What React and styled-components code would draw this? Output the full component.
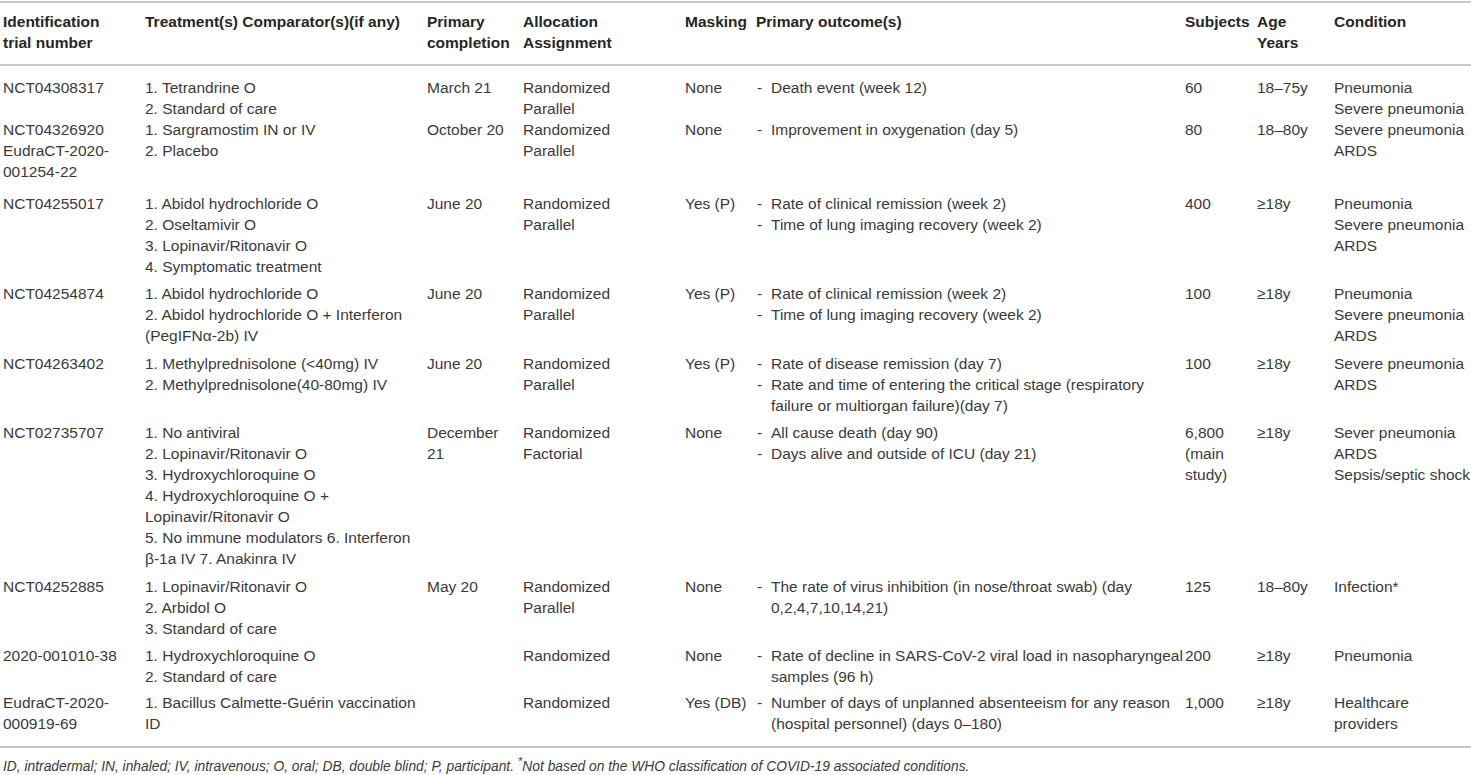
import React from "react";
import styled, { createGlobalStyle } from "styled-components";

const GlobalStyle = createGlobalStyle`
  html, body {
    margin: 0;
    padding: 0;
    background: #ffffff;
  }
  body {
    font-family: "Liberation Sans", Arial, Helvetica, sans-serif;
    color: #333333;
  }
`;

const Page = styled.div`
  width: 1471px;
  padding-top: 1px;
`;

const Table = styled.table`
  width: 1471px;
  table-layout: fixed;
  border-collapse: collapse;
  border-top: 2px solid #c8c8c8;
  border-bottom: 2px solid #c8c8c8;
  font-size: 15.5px;
  line-height: 21px;
`;

const HeadRow = styled.tr`
  border-bottom: 2px solid #c8c8c8;
`;

const HeadCell = styled.th`
  text-align: left;
  vertical-align: top;
  font-weight: 700;
  color: #262626;
  padding: 8px 3px 11px 3px;
  white-space: nowrap;
`;

const Cell = styled.td`
  vertical-align: top;
  padding: ${(p) => p.$pt}px 3px ${(p) => p.$pb}px 3px;
  white-space: nowrap;
  color: #3a3a3a;
`;

const Line = styled.div`
  white-space: nowrap;
`;

const Outcome = styled.div`
  display: flex;
  white-space: nowrap;
`;

const Dash = styled.span`
  flex: 0 0 14px;
  padding-left: 1px;
`;

const Footnote = styled.p`
  margin: 4px 0 0 3px;
  font-size: 13.8px;
  line-height: 18px;
  font-style: italic;
  color: #3a3a3a;
`;

// column widths, left to right
const widths = [142, 282, 96, 162, 71, 429, 72, 77, 140];

const headers = [
  ["Identification", "trial number"],
  ["Treatment(s) Comparator(s)(if any)"],
  ["Primary", "completion"],
  ["Allocation", "Assignment"],
  ["Masking"],
  ["Primary outcome(s)"],
  ["Subjects"],
  ["Age", "Years"],
  ["Condition"],
];

const rows = [
  {
    pt: 11,
    pb: 0,
    id: ["NCT04308317"],
    treat: ["1. Tetrandrine O", "2. Standard of care"],
    date: ["March 21"],
    alloc: ["Randomized", "Parallel"],
    mask: ["None"],
    out: [["Death event (week 12)"]],
    subj: ["60"],
    age: ["18–75y"],
    cond: ["Pneumonia", "Severe pneumonia"],
  },
  {
    pt: 0,
    pb: 8,
    id: ["NCT04326920", "EudraCT-2020-", "001254-22"],
    treat: ["1. Sargramostim IN or IV", "2. Placebo"],
    date: ["October 20"],
    alloc: ["Randomized", "Parallel"],
    mask: ["None"],
    out: [["Improvement in oxygenation (day 5)"]],
    subj: ["80"],
    age: ["18–80y"],
    cond: ["Severe pneumonia", "ARDS"],
  },
  {
    pt: 3,
    pb: 3,
    id: ["NCT04255017"],
    treat: [
      "1. Abidol hydrochloride O",
      "2. Oseltamivir O",
      "3. Lopinavir/Ritonavir O",
      "4. Symptomatic treatment",
    ],
    date: ["June 20"],
    alloc: ["Randomized", "Parallel"],
    mask: ["Yes (P)"],
    out: [
      ["Rate of clinical remission (week 2)"],
      ["Time of lung imaging recovery (week 2)"],
    ],
    subj: ["400"],
    age: ["≥18y"],
    cond: ["Pneumonia", "Severe pneumonia", "ARDS"],
  },
  {
    pt: 3,
    pb: 3,
    id: ["NCT04254874"],
    treat: [
      "1. Abidol hydrochloride O",
      "2. Abidol hydrochloride O + Interferon",
      "(PegIFNα-2b) IV",
    ],
    date: ["June 20"],
    alloc: ["Randomized", "Parallel"],
    mask: ["Yes (P)"],
    out: [
      ["Rate of clinical remission (week 2)"],
      ["Time of lung imaging recovery (week 2)"],
    ],
    subj: ["100"],
    age: ["≥18y"],
    cond: ["Pneumonia", "Severe pneumonia", "ARDS"],
  },
  {
    pt: 4,
    pb: 3,
    id: ["NCT04263402"],
    treat: ["1. Methylprednisolone (<40mg) IV", "2. Methylprednisolone(40-80mg) IV"],
    date: ["June 20"],
    alloc: ["Randomized", "Parallel"],
    mask: ["Yes (P)"],
    out: [
      ["Rate of disease remission (day 7)"],
      [
        "Rate and time of entering the critical stage (respiratory",
        "failure or multiorgan failure)(day 7)",
      ],
    ],
    subj: ["100"],
    age: ["≥18y"],
    cond: ["Severe pneumonia", "ARDS"],
  },
  {
    pt: 3,
    pb: 3,
    id: ["NCT02735707"],
    treat: [
      "1. No antiviral",
      "2. Lopinavir/Ritonavir O",
      "3. Hydroxychloroquine O",
      "4. Hydroxychloroquine O +",
      "Lopinavir/Ritonavir O",
      "5. No immune modulators 6. Interferon",
      "β-1a IV 7. Anakinra IV",
    ],
    date: ["December", "21"],
    alloc: ["Randomized", "Factorial"],
    mask: ["None"],
    out: [["All cause death (day 90)"], ["Days alive and outside of ICU (day 21)"]],
    subj: ["6,800", "(main", "study)"],
    age: ["≥18y"],
    cond: ["Sever pneumonia", "ARDS", "Sepsis/septic shock"],
  },
  {
    pt: 4,
    pb: 3,
    id: ["NCT04252885"],
    treat: ["1. Lopinavir/Ritonavir O", "2. Arbidol O", "3. Standard of care"],
    date: ["May 20"],
    alloc: ["Randomized", "Parallel"],
    mask: ["None"],
    out: [
      [
        "The rate of virus inhibition (in nose/throat swab) (day",
        "0,2,4,7,10,14,21)",
      ],
    ],
    subj: ["125"],
    age: ["18–80y"],
    cond: ["Infection*"],
  },
  {
    pt: 3,
    pb: 3,
    id: ["2020-001010-38"],
    treat: ["1. Hydroxychloroquine O", "2. Standard of care"],
    date: [],
    alloc: ["Randomized"],
    mask: ["None"],
    out: [
      [
        "Rate of decline in SARS-CoV-2 viral load in nasopharyngeal",
        "samples (96 h)",
      ],
    ],
    subj: ["200"],
    age: ["≥18y"],
    cond: ["Pneumonia"],
  },
  {
    pt: 2,
    pb: 12,
    id: ["EudraCT-2020-", "000919-69"],
    treat: ["1. Bacillus Calmette-Guérin vaccination", "ID"],
    date: [],
    alloc: ["Randomized"],
    mask: ["Yes (DB)"],
    out: [
      [
        "Number of days of unplanned absenteeism for any reason",
        "(hospital personnel) (days 0–180)",
      ],
    ],
    subj: ["1,000"],
    age: ["≥18y"],
    cond: ["Healthcare", "providers"],
  },
];

const Lines = ({ items }) => items.map((t, i) => <Line key={i}>{t}</Line>);

const Outcomes = ({ items }) =>
  items.map((lines, i) => (
    <Outcome key={i}>
      <Dash>-</Dash>
      <div>
        <Lines items={lines} />
      </div>
    </Outcome>
  ));

const App = () => {
  return (
    <Page>
      <GlobalStyle />
      <Table>
        <colgroup>
          {widths.map((w, i) => (
            <col key={i} style={{ width: w }} />
          ))}
        </colgroup>
        <thead>
          <HeadRow>
            {headers.map((h, i) => (
              <HeadCell key={i}>
                <Lines items={h} />
              </HeadCell>
            ))}
          </HeadRow>
        </thead>
        <tbody>
          {rows.map((r, i) => (
            <tr key={i}>
              <Cell $pt={r.pt} $pb={r.pb}>
                <Lines items={r.id} />
              </Cell>
              <Cell $pt={r.pt} $pb={r.pb}>
                <Lines items={r.treat} />
              </Cell>
              <Cell $pt={r.pt} $pb={r.pb}>
                <Lines items={r.date} />
              </Cell>
              <Cell $pt={r.pt} $pb={r.pb}>
                <Lines items={r.alloc} />
              </Cell>
              <Cell $pt={r.pt} $pb={r.pb}>
                <Lines items={r.mask} />
              </Cell>
              <Cell $pt={r.pt} $pb={r.pb}>
                <Outcomes items={r.out} />
              </Cell>
              <Cell $pt={r.pt} $pb={r.pb}>
                <Lines items={r.subj} />
              </Cell>
              <Cell $pt={r.pt} $pb={r.pb}>
                <Lines items={r.age} />
              </Cell>
              <Cell $pt={r.pt} $pb={r.pb}>
                <Lines items={r.cond} />
              </Cell>
            </tr>
          ))}
        </tbody>
      </Table>
      <Footnote>
        ID, intradermal; IN, inhaled; IV, intravenous; O, oral; DB, double
        blind; P, participant. <sup>*</sup>Not based on the WHO classification of
        COVID-19 associated conditions.
      </Footnote>
    </Page>
  );
};

export default App;
